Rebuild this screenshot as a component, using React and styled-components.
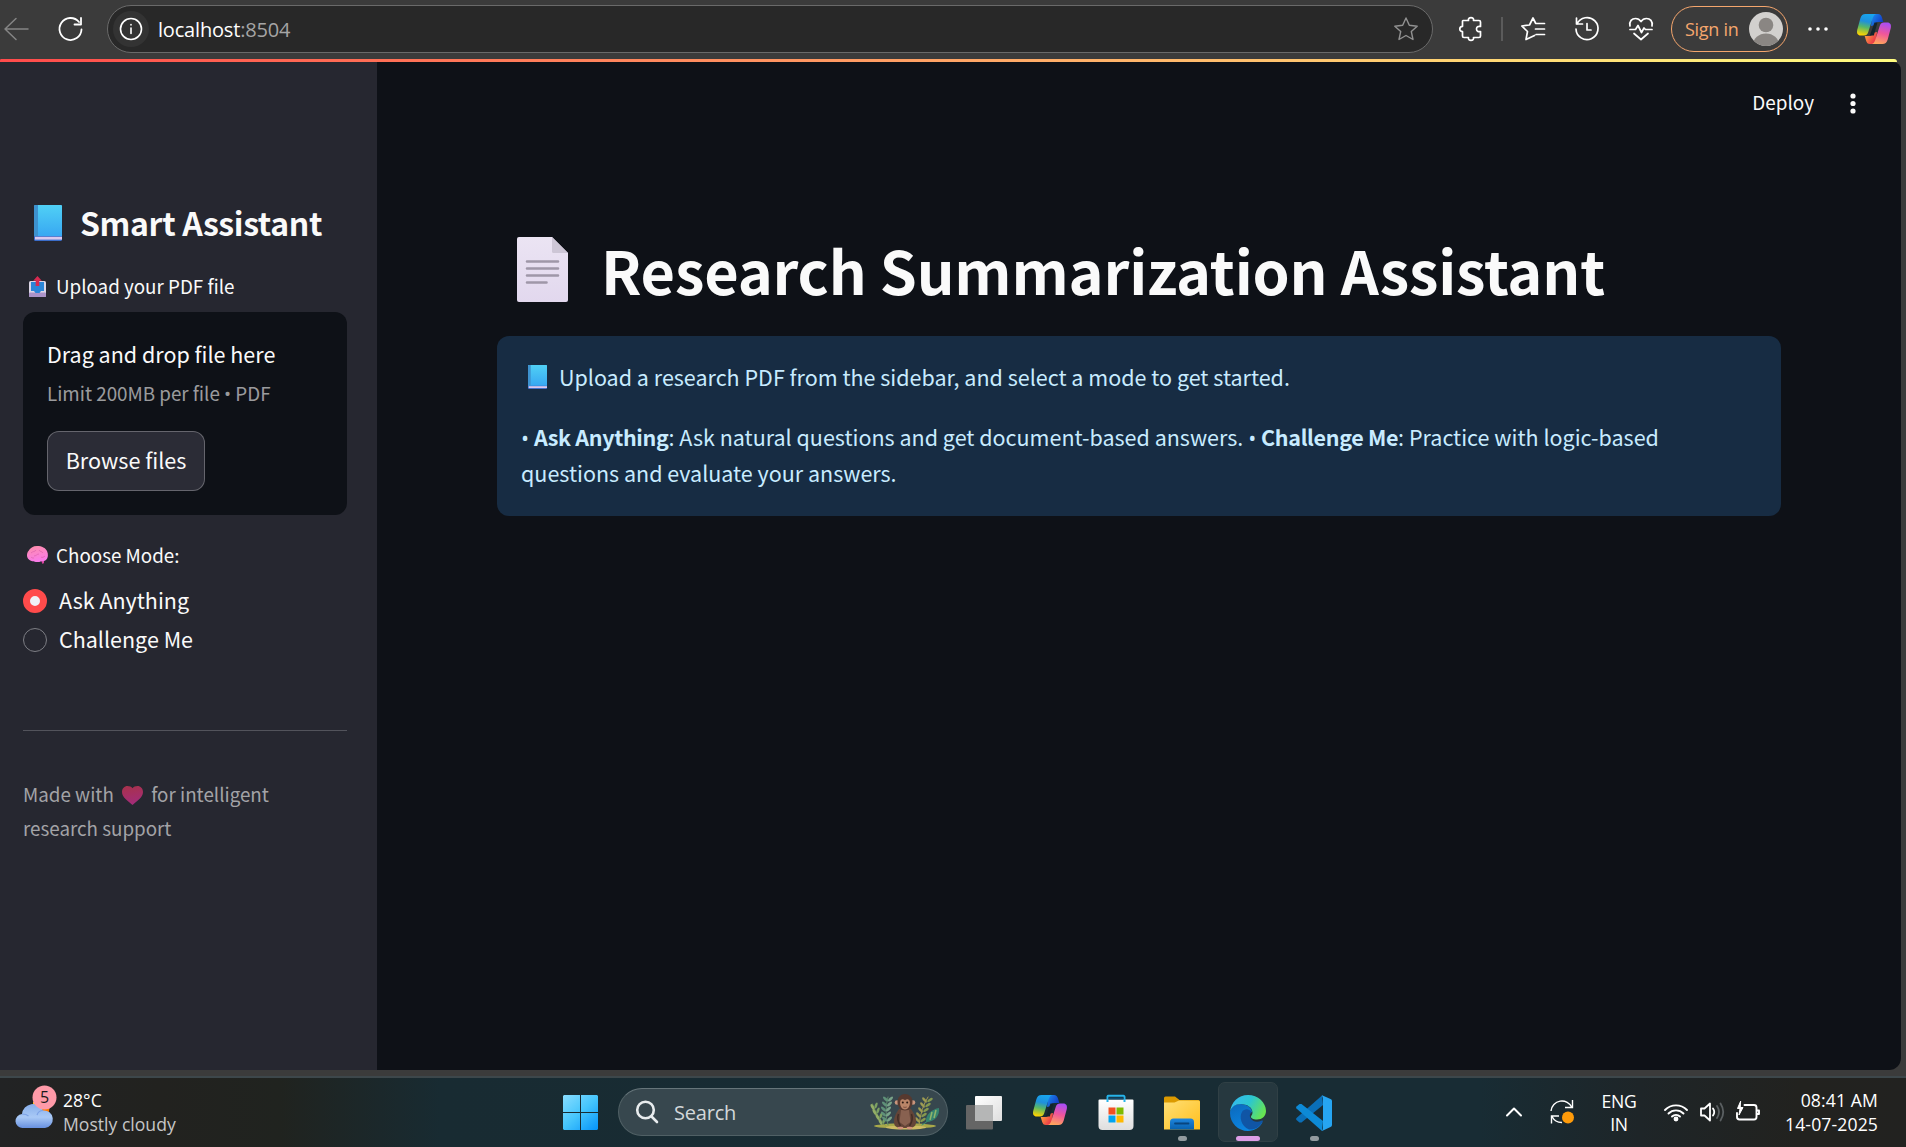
import React from "react";
import styled, { createGlobalStyle } from "styled-components";

const sans = `"Noto Sans CJK SC", "Noto Sans", sans-serif`;
const system = `"Open Sans", "Noto Sans", sans-serif`;

const GlobalStyle = createGlobalStyle`
  * { box-sizing: border-box; }
  html, body { margin: 0; padding: 0; background: #3b3b3b; overflow: hidden; }
  svg { display: block; flex: none; overflow: visible; }
  p, h1, h2 { margin: 0; }
  button { font: inherit; border: 0; padding: 0; background: none; color: inherit; }
`;

const Screen = styled.div`
  width: 1906px;
  height: 1147px;
  display: flex;
  flex-direction: column;
  background: #3b3b3b;
  overflow: hidden;
  font-family: ${sans};
`;

/* Browser toolbar */
const Toolbar = styled.header`
  height: 59px;
  flex: none;
  display: flex;
  align-items: center;
  padding: 0 15px 2px 4px;
  font-family: ${system};
  color: #fff;
`;
const AddressBar = styled.div`
  width: 1327px;
  height: 48px;
  margin-left: 24px;
  padding: 0 14px 0 5px;
  display: flex;
  align-items: center;
  border: 1.5px solid #6a6a6a;
  border-radius: 24px;
  background: #282828;
`;
const InfoBadge = styled.div`
  width: 36px;
  height: 36px;
  border-radius: 50%;
  background: #333;
  display: grid;
  place-items: center;
`;
const Url = styled.span`
  flex: 1;
  margin-left: 9px;
  padding-top: 2px;
  font-size: 20px;
  line-height: 28px;
  letter-spacing: -0.18px;
  color: #fff;
`;
const Port = styled.span`
  color: #a5a5a5;
`;
const ToolIcons = styled.div`
  display: flex;
  align-items: center;
  margin-left: 26px;
`;
const ToolButton = styled.button`
  width: 24px;
  height: 24px;
  margin-right: ${(p) => p.$gap || 0}px;
`;
const Divider = styled.span`
  width: 2px;
  height: 24px;
  margin-right: 18px;
  background: #5b5b5b;
`;
const SignIn = styled.button`
  width: 117px;
  height: 46px;
  padding: 0 4px 0 13px;
  display: flex;
  align-items: center;
  justify-content: space-between;
  border: 1.5px solid #f5a66d;
  border-radius: 23px;
  color: #f5a66d;
  font-size: 18px;
  letter-spacing: -0.3px;
`;

/* Page */
const Progress = styled.div`
  width: 1897px;
  height: 3px;
  flex: none;
  border-radius: 3px 8px 0 0;
  background: linear-gradient(90deg, #ff4b4b, #fffd80);
`;
const Page = styled.div`
  width: 1901px;
  height: 1008px;
  flex: none;
  display: flex;
  border-radius: 0 8px 12px 0;
  background: #0e1117;
  color: #fafafa;
  overflow: hidden;
`;
const Sidebar = styled.aside`
  width: 377px;
  padding: 138px 30px 0 23px;
  background: #262730;
`;
const SidebarTitle = styled.h2`
  height: 44px;
  padding-left: 11px;
  display: flex;
  align-items: center;
  gap: 18px;
  font-size: 32px;
  line-height: 44px;
  letter-spacing: -0.38px;
  font-weight: 600;
  white-space: nowrap;
  svg { margin-top: 2px; }
`;
const FieldLabel = styled.div`
  height: 32px;
  margin-top: ${(p) => p.$top}px;
  padding-left: ${(p) => p.$indent}px;
  display: flex;
  align-items: center;
  gap: ${(p) => p.$gap}px;
  font-size: 18.8px;
  line-height: 32px;
`;
const DropZone = styled.section`
  height: 203px;
  margin-top: 10px;
  padding: 24px;
  border-radius: 12px;
  background: #0e1117;
`;
const DropText = styled.p`
  font-size: 21.5px;
  line-height: 36px;
`;
const DropHint = styled.p`
  margin-top: 5px;
  font-size: 18.8px;
  line-height: 32px;
  color: rgba(250, 250, 250, 0.6);
`;
const Bullet = styled.span`
  font-family: "Open Sans", "Noto Sans", sans-serif;
  line-height: 1;
`;
const BrowseButton = styled.button`
  display: block;
  width: 158px;
  height: 60px;
  margin-top: 22px;
  padding-bottom: 3px;
  border: 1px solid rgba(250, 250, 250, 0.28);
  border-radius: 12px;
  background: #2b2c36;
  font-family: ${sans};
  font-size: 21.6px;
`;
const RadioList = styled.div`
  margin-top: 12px;
  display: flex;
  flex-direction: column;
  gap: 3px;
`;
const RadioRow = styled.label`
  height: 36px;
  display: flex;
  align-items: center;
  gap: 12px;
`;
const RadioDot = styled.span`
  width: 24px;
  height: 24px;
  border-radius: 50%;
  border: ${(p) => (p.$on ? "7.5px solid #ff4b4b" : "1.5px solid #7d7e84")};
  background: ${(p) => (p.$on ? "#f0f2f6" : "#262730")};
`;
const RadioText = styled.span`
  padding-bottom: 3px;
  font-size: 21.5px;
  line-height: 33px;
`;
const Rule = styled.hr`
  height: 1px;
  margin: 72px 0 46px;
  border: 0;
  background: #52535b;
`;
const Caption = styled.p`
  width: 300px;
  font-size: 18.8px;
  line-height: 34px;
  color: #a3a3a7;
  svg {
    display: inline-block;
    vertical-align: -3px;
    margin: 0 4px 0 4px;
  }
`;

const Main = styled.main`
  flex: 1;
  display: flex;
  flex-direction: column;
`;
const AppHeader = styled.div`
  height: 90px;
  padding: 0 40px 8px 0;
  display: flex;
  align-items: center;
  justify-content: flex-end;
  gap: 31px;
  font-size: 18.9px;
`;
const DeployButton = styled.button`
  padding-bottom: 3px;
`;
const Content = styled.div`
  width: 1284px;
  margin: 73px 0 0 120px;
`;
const Title = styled.h1`
  height: 88px;
  padding-left: 20px;
  display: flex;
  align-items: center;
  gap: 33px;
  font-size: 59.4px;
  line-height: 88px;
  letter-spacing: -0.18px;
  font-weight: 700;
  white-space: nowrap;
  svg { margin-top: 1px; }
`;
const Notice = styled.section`
  height: 180px;
  margin-top: 23px;
  padding: 23px 24px;
  border-radius: 12px;
  background: #172c43;
  color: #c7ebff;
  font-size: 21.5px;
  line-height: 36px;
`;
const NoticeLead = styled.p`
  display: flex;
  align-items: center;
  gap: 12px;
  padding-left: 7px;
  margin-bottom: 24px;
`;
const NoticeBody = styled.p`
  width: 1180px;
  b { font-weight: 600; letter-spacing: -0.33px; }
`;

/* Taskbar */
const Taskbar = styled.footer`
  height: 71px;
  margin-top: 6px;
  flex: none;
  display: flex;
  align-items: center;
  border-top: 2px solid #3d474b;
  background: linear-gradient(90deg, #222324 0, #22221f 160px, #20231f 280px, #182b32 440px, #182c34 1000px, #182c34 1480px, #1e2528 1640px, #22221f 1800px, #222220 100%);
  font-family: ${system};
  color: #fff;
`;
const Weather = styled.div`
  width: 563px;
  height: 100%;
  padding: 7px 0 0 16px;
  display: flex;
  gap: 5px;
`;
const WeatherText = styled.div`
  padding-top: 3px;
  font-size: 17.6px;
  line-height: 24px;
`;
const Dim = styled.div`
  color: #c6c6c6;
`;
const SearchBox = styled.div`
  width: 330px;
  height: 48px;
  margin: 0 18px 1px 20px;
  padding: 0 7px 0 17px;
  display: flex;
  align-items: center;
  border: 1.5px solid #506065;
  border-top-color: #66757a;
  border-radius: 24px;
  background: #37474e;
  font-size: 20px;
  letter-spacing: -0.2px;
  color: #d3d8da;
`;
const SearchLabel = styled.span`
  flex: 1;
  margin-left: 16px;
`;
const Apps = styled.div`
  display: flex;
  align-items: center;
  gap: 6px;
  margin: 0 0 2px -12px;
`;
const AppTile = styled.div`
  width: 60px;
  height: 60px;
  padding-top: 12px;
  display: flex;
  flex-direction: column;
  align-items: center;
  justify-content: space-between;
  border-radius: 7px;
  border: 1px solid ${(p) => (p.$active ? "#304045" : "transparent")};
  background: ${(p) => (p.$active ? "#26383f" : "transparent")};
`;
const Indicator = styled.span`
  width: ${(p) => (p.$active ? 24 : 9)}px;
  height: 5px;
  border-radius: 3px;
  background: ${(p) => (p.$active ? "#dd9ee8" : p.$open ? "#929b9f" : "transparent")};
`;
const Tray = styled.div`
  margin-left: auto;
  padding: 0 28px 2px 0;
  display: flex;
  align-items: center;
  font-size: 17.6px;
  line-height: 24px;
`;
const Language = styled.div`
  width: 36px;
  margin: 0 27px 0 27px;
  padding-top: 2px;
  text-align: center;
  letter-spacing: -0.3px;
  line-height: 23px;
`;
const TrayIcons = styled.div`
  display: flex;
  align-items: center;
  gap: 12px;
`;
const Clock = styled.div`
  width: 118px;
  padding-top: 1px;
  text-align: right;
  letter-spacing: 0.12px;
`;

const Line = ({ w = 24, h = 24, sw = 1.5, color = "#fff", box, children }) => (
  <svg width={w} height={h} viewBox={box || `0 0 ${w} ${h}`} fill="none" stroke={color} strokeWidth={sw} strokeLinecap="round" strokeLinejoin="round">
    {children}
  </svg>
);

const Book = ({ w, h, id }) => (
  <svg width={w} height={h} viewBox="0 0 28 36" preserveAspectRatio="none">
    <defs>
      <linearGradient id={id} x1="0" y1="0" x2="0" y2="1">
        <stop offset="0" stopColor="#50d0f5" />
        <stop offset="1" stopColor="#38a8f2" />
      </linearGradient>
    </defs>
    <rect width="28" height="36" rx="1.5" fill="#3a6cc8" />
    <rect x="1" y="31.8" width="27" height="2.8" fill="#d9c8ee" />
    <path d="M1.5 0H27a1 1 0 0 1 1 1v30H0V1.500A1.500 1.500 0 0 1 1.500 0Z" fill={`url(#${id})`} />
    <path d="M0 1.500A1.500 1.500 0 0 1 1.500 0H4v31H0Z" fill="#3d92cf" />
  </svg>
);

const Outbox = () => (
  <svg width="17" height="21" viewBox="0 0 17 21">
    <rect y="5" width="17" height="16" rx="1.500" fill="#dcd6e6" />
    <rect y="16.500" width="17" height="4.500" rx="1" fill="#ab93c9" />
    <path d="M2 6h13v9h-3l-1.500 2h-4L5 15H2Z" fill="#2b86d8" />
    <path d="M8.500 0 12.800 4.800h-2.500v5.200h-3.600V4.800H4.200Z" fill="#d62a50" />
  </svg>
);

const Brain = () => (
  <svg width="21" height="18" viewBox="0 0 21 18">
    <defs>
      <linearGradient id="brain" x1="0" y1="0" x2="0.300" y2="1">
        <stop offset="0" stopColor="#ff8fa8" />
        <stop offset="1" stopColor="#f97be8" />
      </linearGradient>
    </defs>
    <path d="M13.500 13h3.500v4l-1.500 1Z" fill="#d6449d" />
    <path d="M1.500 5C3 2 6 0 10 0c5 0 8.500 2 10 5 1.500 3 1.200 7-1 9-1.500 1.300-3.500 1.500-5 1.200C12 16.300 8 16.500 6.500 15.300 3 15.300 0 12.500 0 9.500 0 7.500.500 6 1.500 5Z" fill="url(#brain)" />
    <path d="M4 7c2-2 4-1 5-3M7 10c2 0 3-2 5-2M12 4c1 2 3 1 4 3M14 11c1 1 3 0 4-1M4 11c1 1 2 1 3 1" fill="none" stroke="#e066b0" strokeWidth="0.800" />
  </svg>
);

const Heart = () => (
  <svg width="21" height="19" viewBox="0 0 21 19">
    <defs>
      <linearGradient id="heart" x1="0" y1="0" x2="0.200" y2="1">
        <stop offset="0" stopColor="#a8324a" />
        <stop offset="1" stopColor="#a32c78" />
      </linearGradient>
    </defs>
    <path d="M10.500 19C6 15 0 11.500 0 6 0 2.500 2.500 0 5.500 0c2 0 4 .700 5 2.200C11.500.700 13.500 0 15.500 0 18.500 0 21 2.500 21 6c0 5.500-6 9-10.500 13Z" fill="url(#heart)" />
  </svg>
);

const PageIcon = () => (
  <svg width="51" height="65" viewBox="0 0 51 65">
    <defs>
      <linearGradient id="paper" x1="0" y1="0" x2="0" y2="1">
        <stop offset="0" stopColor="#ebe4f3" />
        <stop offset="1" stopColor="#e2d8ee" />
      </linearGradient>
    </defs>
    <path d="M2 0H35L51 16V63a2 2 0 0 1-2 2H2a2 2 0 0 1-2-2V2A2 2 0 0 1 2 0Z" fill="url(#paper)" />
    <path d="M35 0 51 16H36.500A1.500 1.500 0 0 1 35 14.500Z" fill="#cdc6d6" />
    <path d="M10 24.500H41M10 31.500H41M10 38.500H41M10 45.500H29.500" stroke="#9f97a8" strokeWidth="2.600" strokeLinecap="round" />
  </svg>
);

const Copilot = ({ id }) => {
  const flap = "M15.500 0H21c2.300 0 3.300 1.300 3.900 3.300L26.300 8H21.500c-2.300 0-3.300 1.200-4 3.200L14 12Z";
  const wing = "M8.500 0H19.500c-2.300.500-3.200 2.300-3.900 4.600L11.200 18.300c-.800 2.300-2 3.200-4.200 3.200H3.700C.700 21.500-.500 19.200.200 16L3.300 4.600C4.200 1.300 5.800 0 8.500 0Z";
  return (
    <svg width="34" height="30" viewBox="0 0 34 30">
      <defs>
        <linearGradient id={`${id}a`} x1="0.550" y1="0" x2="0.350" y2="1">
          <stop offset="0" stopColor="#18a5ee" />
          <stop offset="0.350" stopColor="#1f90dc" />
          <stop offset="0.620" stopColor="#57b767" />
          <stop offset="1" stopColor="#ffd400" />
        </linearGradient>
        <linearGradient id={`${id}b`} x1="0.350" y1="1" x2="0.600" y2="0">
          <stop offset="0" stopColor="#a94df5" />
          <stop offset="0.500" stopColor="#f0569a" />
          <stop offset="1" stopColor="#ffa55c" />
        </linearGradient>
        <linearGradient id={`${id}c`} x1="0" y1="0" x2="1" y2="0.600">
          <stop offset="0.200" stopColor="#1b7fe8" />
          <stop offset="1" stopColor="#1238c4" />
        </linearGradient>
        <linearGradient id={`${id}d`} x1="0" y1="0" x2="1" y2="0.600">
          <stop offset="0.200" stopColor="#e8324a" />
          <stop offset="1" stopColor="#ff9a3e" />
        </linearGradient>
      </defs>
      <path d={flap} fill={`url(#${id}c)`} />
      <path d={flap} transform="rotate(180 17 15)" fill={`url(#${id}d)`} />
      <path d="M17.500 8.500h3L16.800 21.500h-4Z" fill="#14242c" />
      <path d={wing} fill={`url(#${id}a)`} />
      <path d={wing} transform="rotate(180 17 15)" fill={`url(#${id}b)`} />
    </svg>
  );
};

const Cloud = () => (
  <svg width="42" height="44" viewBox="0 0 42 44">
    <defs>
      <linearGradient id="cloud" x1="0" y1="0" x2="0" y2="1">
        <stop offset="0" stopColor="#86aeea" />
        <stop offset="0.550" stopColor="#a9c9f6" />
        <stop offset="1" stopColor="#6790e0" />
      </linearGradient>
    </defs>
    <path d="M17 17h17.500l-2 12H17Z" fill="#ff7a00" />
    <path d="M17 17h4v5h-4Z" fill="#ffc21a" />
    <path d="M7 43a7 7 0 0 1-1-14 11 11 0 0 1 21-3.500 8.700 8.700 0 0 1 2 17.500Z" fill="url(#cloud)" />
    <path d="M21 30c1-3 3-4.500 6-4.500M6 29c3 0 5 .5 6.500 2" fill="none" stroke="#7da2e5" strokeWidth="1.200" />
    <circle cx="28.500" cy="12.500" r="12" fill="#ff9aa8" />
    <text x="28.500" y="18.300" textAnchor="middle" fontFamily="Open Sans, sans-serif" fontSize="16" fill="#1a1a1a">5</text>
  </svg>
);

const Leaf = ({ x, y, r, s = 1, fill }) => (
  <ellipse cx="0" cy="0" rx={3.2 * s} ry={1.3 * s} fill={fill} transform={`translate(${x} ${y}) rotate(${r})`} />
);

const Monkey = () => (
  <svg width="69" height="36" viewBox="0 0 69 36">
    <ellipse cx="34" cy="32" rx="31" ry="2.600" fill="#a9a94a" />
    <ellipse cx="35" cy="33.500" rx="20" ry="2" fill="#cdbb63" />
    <g fill="none" strokeLinecap="round" strokeWidth="1">
      <path d="M14 31Q6 23 1.500 10" stroke="#6c9457" />
      <path d="M17 31Q13 17 17 3" stroke="#5c8a68" />
      <path d="M48 31Q50 14 57 3" stroke="#a39a50" />
      <path d="M51 31Q60 26 66 16" stroke="#3a8f78" />
    </g>
    {[[2, 12], [4, 17], [7, 22], [10, 27]].map(([x, y]) => (
      <g key={x}>
        <Leaf x={x - 0.5} y={y + 1} r={60} fill="#93ad66" />
        <Leaf x={x + 3} y={y - 0.5} r={-70} fill="#7ba063" />
      </g>
    ))}
    {[[17, 5], [16, 10], [15, 15], [15, 20], [16, 25]].map(([x, y]) => (
      <g key={y}>
        <Leaf x={x - 2.5} y={y} r={45} fill="#5f9078" />
        <Leaf x={x + 2.500} y={y} r={-45} fill="#79a389" />
      </g>
    ))}
    {[[56, 5], [54, 10], [52, 15], [50, 20], [49, 25]].map(([x, y]) => (
      <g key={y}>
        <Leaf x={x - 2.5} y={y + 1} r={50} fill="#9f9c52" />
        <Leaf x={x + 3} y={y + 1} r={-35} fill="#86984f" />
      </g>
    ))}
    <path d="M55 28C54 21 61 15 68 14 69 21 64 28 55 28Z" fill="#36836f" />
    <path d="M59 26 61 18M63 24 65 16" stroke="#8fb46b" strokeWidth="1.500" />
    <path d="M28 15c3-2 9-2 12 0 3 4 5.500 9 5 14-.500 4-3 5-11 5s-10.500-1-11-5c-.500-5 2-10 5-14Z" fill="#644538" />
    <path d="M30 16h8l1.500 12-5.500 4-5.500-4Z" fill="#886150" />
    <path d="M27.500 20c-1.500 4-.500 8 2 12M40.500 20c1.500 4 .500 8-2 12" fill="none" stroke="#442e27" strokeWidth="1.600" />
    <circle cx="26" cy="8.500" r="2.300" fill="#c9957c" />
    <circle cx="42" cy="8.500" r="2.300" fill="#c9957c" />
    <path d="M26.500 8c0-5 3.500-8 7.500-8s7.500 3 7.500 8-3.500 8.500-7.500 8.500S26.500 13 26.500 8Z" fill="#57392f" />
    <path d="M29.500 6.500c1.500-2 3-1.500 4.500-.300 1.500-1.200 3-1.700 4.500.300 1.500 4-1 9-4.500 9s-6-5-4.500-9Z" fill="#b98568" />
    <circle cx="31.800" cy="8.500" r="1" fill="#2a1a14" />
    <circle cx="36.200" cy="8.500" r="1" fill="#2a1a14" />
    <path d="M32.200 13q1.800.800 3.600 0" stroke="#70453a" fill="none" strokeWidth="0.800" />
    <ellipse cx="29.500" cy="34" rx="3" ry="1.300" fill="#d3937c" />
    <ellipse cx="38.500" cy="34" rx="3" ry="1.300" fill="#d3937c" />
  </svg>
);

const WindowsLogo = () => (
  <svg width="35" height="35" viewBox="0 0 35 35">
    <defs>
      <linearGradient id="win" gradientUnits="userSpaceOnUse" x1="2" y1="0" x2="33" y2="35">
        <stop offset="0" stopColor="#85dcff" />
        <stop offset="0.500" stopColor="#45c5fc" />
        <stop offset="1" stopColor="#0896fb" />
      </linearGradient>
    </defs>
    <path d="M1 0H17V17H0V1ZM18 0H34L35 1V17H18ZM0 18H17V35H1L0 34ZM18 18H35V34L34 35H18Z" fill="url(#win)" />
  </svg>
);

const TaskView = () => (
  <svg width="36" height="36" viewBox="0 0 36 36">
    <defs>
      <linearGradient id="tv" x1="0" y1="0" x2="1" y2="1">
        <stop offset="0" stopColor="#fff" />
        <stop offset="1" stopColor="#dedede" />
      </linearGradient>
    </defs>
    <rect x="9" y="1" width="27" height="25" rx="1" fill="url(#tv)" />
    <rect x="0" y="10" width="27" height="24.500" rx="1" fill="#656565" />
    <rect x="9" y="10" width="18" height="16" fill="#b5b6b6" />
  </svg>
);

const Store = () => (
  <svg width="36" height="36" viewBox="0 0 36 36">
    <defs>
      <linearGradient id="bag" x1="0" y1="0" x2="0" y2="1">
        <stop offset="0" stopColor="#fff" />
        <stop offset="1" stopColor="#dedede" />
      </linearGradient>
    </defs>
    <path d="M1.500 4.500H34.500a1 1 0 0 1 1 1V31a4 4 0 0 1-4 4h-27a4 4 0 0 1-4-4V5.500a1 1 0 0 1 1-1Z" fill="url(#bag)" />
    <path d="M9.500 7V1.500A1 1 0 0 1 10.500.8H25.500a1 1 0 0 1 1 1V7" fill="none" stroke="#26b4ea" strokeWidth="2" />
    <path d="M10.500 2.500H25.500V4.500H10.500Z" fill="#114b6e" />
    <path d="M10.500 12.500h7v7h-7Z" fill="#f25022" />
    <path d="M18.500 12.500h7v7h-7Z" fill="#7fba00" />
    <path d="M10.500 20.500h7v7h-7Z" fill="#00a4ef" />
    <path d="M18.500 20.500h7v7h-7Z" fill="#ffb900" />
  </svg>
);

const Folder = () => (
  <svg width="36" height="36" viewBox="0 0 36 36">
    <defs>
      <linearGradient id="fold" x1="0" y1="0" x2="1" y2="1">
        <stop offset="0" stopColor="#ffdf76" />
        <stop offset="1" stopColor="#ffbf1c" />
      </linearGradient>
      <linearGradient id="tray" x1="0" y1="0" x2="0" y2="1">
        <stop offset="0" stopColor="#1f86de" />
        <stop offset="1" stopColor="#0861ae" />
      </linearGradient>
    </defs>
    <path d="M0 3a1.500 1.500 0 0 1 1.500-1.500H11L15.500 5H34.500A1.500 1.500 0 0 1 36 6.500V12H0Z" fill="#dc9a00" />
    <path d="M0 7.500H10.500L15 5.500H34.500A1.500 1.500 0 0 1 36 7V34.500H0Z" fill="url(#fold)" />
    <path d="M6 34.500V27a3.500 3.500 0 0 1 3.500-3.500h17A3.500 3.500 0 0 1 30 27V34.500Z" fill="url(#tray)" />
    <path d="M11 28.500H24.500" stroke="#08457e" strokeWidth="1.800" strokeLinecap="round" />
  </svg>
);

const Edge = () => (
  <svg width="36" height="36" viewBox="0 0 36 36">
    <defs>
      <linearGradient id="ea" x1="0" y1="0.200" x2="1" y2="0.600">
        <stop offset="0" stopColor="#35b8f1" />
        <stop offset="0.500" stopColor="#2cc6d0" />
        <stop offset="1" stopColor="#68e450" />
      </linearGradient>
      <linearGradient id="eb" x1="0" y1="0" x2="0.500" y2="1">
        <stop offset="0" stopColor="#0c68bb" />
        <stop offset="1" stopColor="#0b86e2" />
      </linearGradient>
    </defs>
    <path d="M0 18C0 12 5 9 10.500 9 17 9 22 13 22 17c-7 1-7 9 0 12 3 1.500 7 .5 10.500-2C30 32.500 24.500 36 18 36 8 36 0 28 0 18Z" fill="url(#eb)" />
    <path d="M12 17C9 22 11 31 19 34.500c5 .7 10.500-2 13.500-7.500 1-1.500 0-2-1.200-1.200C27 28 22 26.500 20.500 23 19 20 20.500 18.500 21.500 17 19 13 14 13.500 12 17Z" fill="#1055a5" />
    <path d="M0 17C1 7 8.500 0 18 0 28 0 36 7.500 36 16c0 5-4 8.500-9 8.500-4 0-6.500-1.500-6-3 .3-1 1.500-1.700 1.500-4C22.500 12.500 17 9 11 9 5 9 1 12.500 0 17Z" fill="url(#ea)" />
  </svg>
);

const Code = () => (
  <svg width="36" height="36" viewBox="0 0 36 36">
    <path d="M26 0 27 10 5.500 27.500 3.500 27.500.5 25a1.500 1.500 0 0 1 0-2L26 .5Z" fill="#0a6fb8" />
    <path d="M26 36 27 26 5.500 9 3.500 9 .5 11.500a1.500 1.500 0 0 0 0 2L26 36Z" fill="#0d8ad6" />
    <path d="M26 .2 34.500 4a2 2 0 0 1 1.500 2V30a2 2 0 0 1-1.500 2L26 36c-.8.300 1-1 1-3V4C27 1.500 25.200.3 26 .2Z" fill="#26a5f2" />
  </svg>
);

const apps = [
  { key: "taskview", icon: <TaskView /> },
  { key: "copilot", icon: <Copilot id="task" /> },
  { key: "store", icon: <Store /> },
  { key: "files", icon: <Folder />, open: true },
  { key: "edge", icon: <Edge />, active: true },
  { key: "code", icon: <Code />, open: true },
];

const modes = [
  { name: "Ask Anything", on: true },
  { name: "Challenge Me", on: false },
];

const MoreDots = styled.svg`
  margin: 0 29px 0 20px;
`;
const SyncIcon = styled.svg`
  margin-left: 28px;
`;

const BrowserBar = () => (
  <Toolbar>
    <ToolButton $gap={31}>
      <Line color="#858585"><path d="M24 12H1M12 1.500 1 12 12 22.500" /></Line>
    </ToolButton>
    <ToolButton>
      <Line sw={1.800}><path d="M22.500 12.500A11 11 0 1 1 20 5M22 1v6.500h-6.500" /></Line>
    </ToolButton>
    <AddressBar>
      <InfoBadge>
        <Line sw={1.600}>
          <circle cx="12" cy="12" r="10.500" />
          <path d="M12 11v5.500M12 7.600v.3" />
        </Line>
      </InfoBadge>
      <Url>localhost<Port>:8504</Port></Url>
      <Line color="#929292" sw={1.400}>
        <path d="M12 1 15.300 8.300 23.200 9.200 17.300 14.500 19 22.500 12 18.500 5 22.500 6.700 14.500.8 9.200 8.700 8.300Z" />
      </Line>
    </AddressBar>
    <ToolIcons>
      <ToolButton $gap={18}>
        <Line sw={1.700}>
          <path d="M4 3.500H9.500C9 1.700 10.300.7 12 .7s3 1 2.500 2.800H20a1.500 1.500 0 0 1 1.500 1.500V9.500C19 9 17.500 10 17.500 12s1.500 3 4 2.500V19A1.500 1.500 0 0 1 20 20.500H14.500C15 22.300 13.700 23.300 12 23.300S9 22.300 9.500 20.500H5A1.500 1.500 0 0 1 3.500 19V14.700C2 14.700.8 13.700.8 12S2 9.300 3.500 9.300V4Z" />
        </Line>
      </ToolButton>
      <Divider />
      <ToolButton $gap={30}>
        <Line sw={1.700}>
          <path d="M23.500 12H14.500M23.500 6.500H15M23.500 17.500H15M13.500 18.500 5 22.500 6.500 14.500.8 9 8.500 8 12 1 14.500 6" />
        </Line>
      </ToolButton>
      <ToolButton $gap={30}>
        <Line sw={1.700}>
          <path d="M1.500 1V7H7.500M2 7A11 11 0 1 1 1 12M12 6.500V13H16" />
        </Line>
      </ToolButton>
      <ToolButton $gap={18}>
        <Line sw={1.700}>
          <path d="M1 9C0 4 3 1.500 6.500 1.500 9 1.500 11 3 12 4.500 13 3 15 1.500 17.500 1.500 21 1.500 24 4 23 9M1 12.500H6.500L9 8.500 12.500 15.500 15 11 16.500 12.500H23M5 16.500 12 22.500 19 16.500" />
        </Line>
      </ToolButton>
      <SignIn>
        Sign in
        <svg width="34" height="34" viewBox="0 0 34 34">
          <defs><clipPath id="face"><circle cx="17" cy="17" r="17" /></clipPath></defs>
          <g clipPath="url(#face)">
            <rect width="34" height="34" fill="#d2d0ce" />
            <circle cx="17" cy="13" r="7.300" fill="#8a8683" />
            <ellipse cx="17" cy="33" rx="13" ry="11.500" fill="#8a8683" />
          </g>
        </svg>
      </SignIn>
    </ToolIcons>
    <MoreDots width="20" height="6" viewBox="0 0 20 6">
      <g fill="#fff"><circle cx="2" cy="3" r="1.800" /><circle cx="10" cy="3" r="1.800" /><circle cx="18" cy="3" r="1.800" /></g>
    </MoreDots>
    <Copilot id="bar" />
  </Toolbar>
);

export default function App() {
  return (
    <Screen>
      <GlobalStyle />
      <BrowserBar />
      <Progress />
      <Page>
        <Sidebar>
          <SidebarTitle><Book w={28} h={36} id="b1" />Smart Assistant</SidebarTitle>
          <FieldLabel $top={26} $indent={6} $gap={10}><Outbox />Upload your PDF file</FieldLabel>
          <DropZone>
            <DropText>Drag and drop file here</DropText>
            <DropHint>Limit 200MB per file <Bullet>•</Bullet> PDF</DropHint>
            <BrowseButton>Browse files</BrowseButton>
          </DropZone>
          <FieldLabel $top={24} $indent={4} $gap={8}><Brain />Choose Mode:</FieldLabel>
          <RadioList>
            {modes.map((m) => (
              <RadioRow key={m.name}>
                <RadioDot $on={m.on} />
                <RadioText>{m.name}</RadioText>
              </RadioRow>
            ))}
          </RadioList>
          <Rule />
          <Caption>Made with <Heart /> for intelligent research support</Caption>
        </Sidebar>
        <Main>
          <AppHeader>
            <DeployButton>Deploy</DeployButton>
            <svg width="16" height="24" viewBox="0 0 16 24">
              <g fill="#fafafa"><circle cx="8" cy="5" r="2.600" /><circle cx="8" cy="12.500" r="2.600" /><circle cx="8" cy="20" r="2.600" /></g>
            </svg>
          </AppHeader>
          <Content>
            <Title><PageIcon />Research Summarization Assistant</Title>
            <Notice>
              <NoticeLead><Book w={19} h={24} id="b2" />Upload a research PDF from the sidebar, and select a mode to get started.</NoticeLead>
              <NoticeBody>
                <Bullet>•</Bullet> <b>Ask Anything</b>: Ask natural questions and get document-based answers. <Bullet>•</Bullet> <b>Challenge Me</b>: Practice with logic-based questions and evaluate your answers.
              </NoticeBody>
            </Notice>
          </Content>
        </Main>
      </Page>
      <Taskbar>
        <Weather>
          <Cloud />
          <WeatherText>
            28°C
            <Dim>Mostly cloudy</Dim>
          </WeatherText>
        </Weather>
        <WindowsLogo />
        <SearchBox>
          <Line w={22} h={24} sw={2.600} color="#e8ecee">
            <circle cx="9.500" cy="10" r="8.300" /><path d="M15.500 16.500 21 22" />
          </Line>
          <SearchLabel>Search</SearchLabel>
          <Monkey />
        </SearchBox>
        <Apps>
          {apps.map((a) => (
            <AppTile key={a.key} $active={a.active}>
              {a.icon}
              <Indicator $active={a.active} $open={a.open} />
            </AppTile>
          ))}
        </Apps>
        <Tray>
          <Line w={16} h={10} sw={2}><path d="M1 8.500 8 1.500 15 8.500" /></Line>
          <SyncIcon width="24" height="25" viewBox="0 0 24 25">
            <path d="M1 12A11 11 0 0 1 22 8.500M22.500 1V8.500H15M1.500 24.500V17H9M2 17.500A11 11 0 0 0 12 23.500" fill="none" stroke="#fff" strokeWidth="1.400" />
            <circle cx="18" cy="18.500" r="6" fill="#ff9b0a" />
          </SyncIcon>
          <Language>ENG<br />IN</Language>
          <TrayIcons>
            <Line w={24} h={20} sw={1.900}>
              <path d="M1 8A15.500 15.500 0 0 1 23 8M4.500 11.500A10.500 10.500 0 0 1 19.500 11.500M8 14.500A6 6 0 0 1 16 14.500" />
              <circle cx="12" cy="17" r="1.500" fill="#fff" stroke="#fff" />
            </Line>
            <Line w={24} h={20} sw={1.800}>
              <path d="M1 6.500H4.500L10 1.500V18.500L4.500 13.500H1Z" />
              <path d="M13 6.500Q15.500 10 13 13.500" />
              <path d="M17 4Q21 10 17 16M20.500 1.500Q26 10 20.500 18.500" stroke="#5a5f61" />
            </Line>
            <Line w={24} h={20} sw={1.900}>
              <path d="M8.500 3H18A2.500 2.500 0 0 1 20.500 5.500V15A2.500 2.500 0 0 1 18 17.500H3.500A2.500 2.500 0 0 1 1 15V11M21 8.500H23V12H21" />
              <path d="M4.500-.5 1.500 6.500H4L3 13 7 5.500H4.500Z" fill="#fff" strokeWidth="1" />
            </Line>
          </TrayIcons>
          <Clock>08:41 AM<br />14-07-2025</Clock>
        </Tray>
      </Taskbar>
    </Screen>
  );
}
